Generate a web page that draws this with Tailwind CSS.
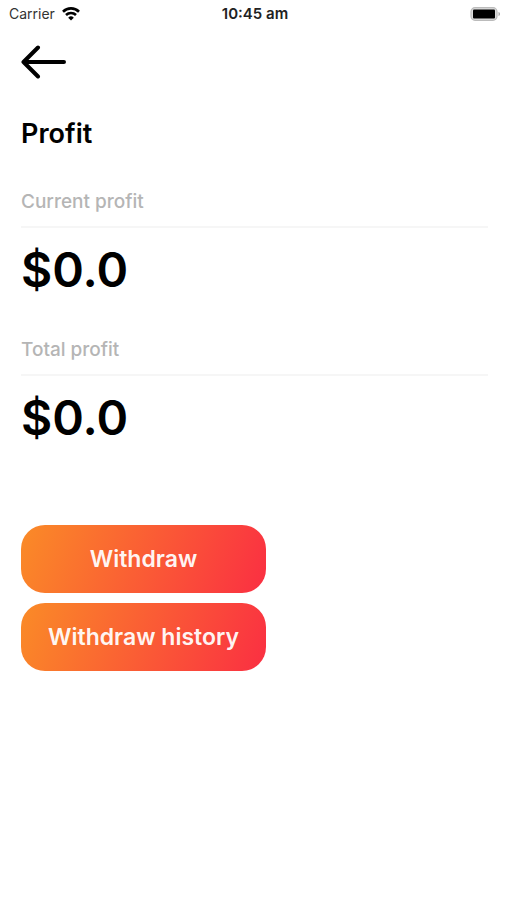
<!DOCTYPE html>
<html lang="en">

<head>
  <meta charset="UTF-8" />
  <meta name="viewport" content="width=device-width, initial-scale=1.0" />
  <title>Profit</title>
  <script src="https://cdn.jsdelivr.net/npm/@tailwindcss/browser@4"></script>
</head>

<body class="min-h-screen bg-white text-black font-['Inter','Liberation_Sans',sans-serif]">

  <!-- Status bar -->
  <header class="grid grid-cols-3 items-center h-7 pl-[9px] pr-1.5 text-sm">
    <div class="flex items-center gap-[7px] text-[#333]">
      <span>Carrier</span>
      <svg class="w-[18px] h-[14px]" viewBox="0 0 18 14" fill="none" stroke="#000" stroke-width="2.6" aria-hidden="true">
        <path d="M1 4.700a11.4 11.4 0 0 1 16 0" />
        <path d="M4 8a7.2 7.2 0 0 1 10 0" />
        <path d="M9 13.500 6.2 10.700a4 4 0 0 1 5.6 0Z" fill="#000" stroke="none" />
      </svg>
    </div>
    <time class="text-center text-[15px] font-semibold text-[#222]">10:45 am</time>
    <svg class="justify-self-end w-[31px] h-[15px]" viewBox="0 0 31 15" aria-hidden="true">
      <rect x="1" y="0.700" width="26" height="12.600" rx="4" fill="#ddd" stroke="#bbb" stroke-width="1.2" />
      <rect x="3" y="2.500" width="22" height="9" rx="1" fill="#000" />
      <path d="M28.5 5c2 .5 2 3.500 0 4Z" fill="#aaa" />
    </svg>
  </header>

  <main class="pl-[21px] pr-[19px] pt-4">
    <button type="button" aria-label="Back" class="block">
      <svg class="w-[47px] h-9" viewBox="0 0 47 36" fill="none" stroke="#000" stroke-width="4" stroke-linecap="round"
        stroke-linejoin="round">
        <path d="M17 3.500 2.500 18 17 32.500M2.500 18H43" />
      </svg>
    </button>

    <h1 class="mt-9 text-[27px] leading-9 font-semibold">Profit</h1>

    <section class="mt-[38px]">
      <h2 class="pb-3 border-b-2 border-[#f6f6f6] text-[19px] leading-6 font-medium text-[#b5b5b5]">Current profit</h2>
      <p class="mt-3 text-5xl leading-[60px] font-semibold">$0.0</p>
    </section>

    <section class="mt-[38px]">
      <h2 class="pb-3 border-b-2 border-[#f6f6f6] text-[19px] leading-6 font-medium text-[#b5b5b5]">Total profit</h2>
      <p class="mt-3 text-5xl leading-[60px] font-semibold">$0.0</p>
    </section>

    <div class="mt-[77px] flex flex-col items-stretch gap-2.5 w-fit">
      <button type="button"
        class="px-[27px] h-[68px] rounded-3xl bg-linear-110/srgb from-[#fa8b27] to-[#fa2f42] text-[23px] font-semibold text-white/95">Withdraw</button>
      <button type="button"
        class="px-[27px] h-[68px] rounded-3xl bg-linear-110/srgb from-[#fa8b27] to-[#fa2f42] text-[23px] font-semibold text-white/95">Withdraw history</button>
    </div>
  </main>

</body>

</html>
